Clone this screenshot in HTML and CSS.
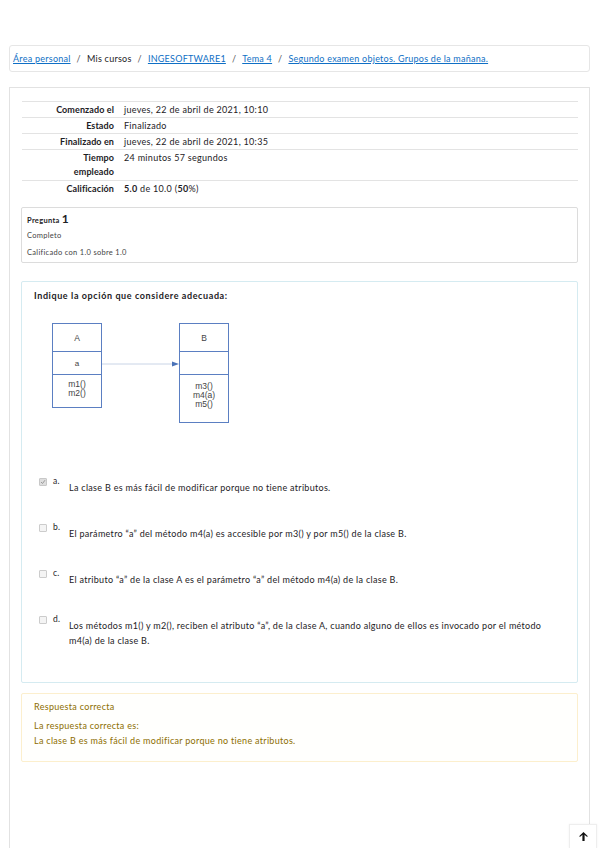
FILE: index.html
```html
<!DOCTYPE html>
<html lang="es">
<head>
<meta charset="utf-8">
<title>Segundo examen objetos</title>
<link rel="stylesheet" href="styles.css">
</head>
<body>
<div class="page">
  <nav class="crumbs">
    <a href="#">Área personal</a><span class="sep">/</span><span class="plain">Mis cursos</span><span class="sep">/</span><a href="#">INGESOFTWARE1</a><span class="sep">/</span><a href="#">Tema 4</a><span class="sep">/</span><a href="#">Segundo examen objetos. Grupos de la mañana.</a>
  </nav>
  <main class="card">
    <table class="summary">
      <tr><th>Comenzado el</th><td>jueves, 22 de abril de 2021, 10:10</td></tr>
      <tr><th>Estado</th><td>Finalizado</td></tr>
      <tr><th>Finalizado en</th><td>jueves, 22 de abril de 2021, 10:35</td></tr>
      <tr><th>Tiempo<br>empleado</th><td>24 minutos 57 segundos</td></tr>
      <tr><th>Calificación</th><td><b>5.0</b> de 10.0 (<b>50</b>%)</td></tr>
    </table>

    <div class="info">
      <div class="qno">Pregunta <span class="num">1</span></div>
      <div class="state">Completo</div>
      <div class="grade">Calificado con 1.0 sobre 1.0</div>
    </div>

    <div class="content">
      <p class="qtext">Indique la opción que considere adecuada:</p>
      <div class="diagram">
        <div class="uml">
          <div class="uml-name">A</div>
          <div class="uml-attr">a</div>
          <div class="uml-meth">m1()<br>m2()</div>
        </div>
        <svg class="assoc" width="77" height="8" viewBox="0 0 77 8">
          <line x1="0" y1="4" x2="71" y2="4" stroke="#c9d4e6" stroke-width="1"/>
          <polygon points="70,1.5 77,4 70,6.5" fill="#4a72b8"/>
        </svg>
        <div class="uml uml-b">
          <div class="uml-name">B</div>
          <div class="uml-attr"></div>
          <div class="uml-meth">m3()<br>m4(a)<br>m5()</div>
        </div>
      </div>

      <div class="answers">
        <div class="opt opt-a"><span class="box checked"><svg width="6" height="6" viewBox="0 0 6 6"><path d="M1 3 L2.5 4.5 L5 1.2" fill="none" stroke="#9a9a9a" stroke-width="1"/></svg></span><span class="letter">a.</span><span class="otext">La clase B es más fácil de modificar porque no tiene atributos.</span></div>
        <div class="opt"><span class="box"></span><span class="letter">b.</span><span class="otext">El parámetro “a” del método m4(a) es accesible por m3() y por m5() de la clase B.</span></div>
        <div class="opt"><span class="box"></span><span class="letter">c.</span><span class="otext">El atributo “a” de la clase A es el parámetro “a” del método m4(a) de la clase B.</span></div>
        <div class="opt"><span class="box"></span><span class="letter">d.</span><span class="otext">Los métodos m1() y m2(), reciben el atributo “a”, de la clase A, cuando alguno de ellos es invocado por el método m4(a) de la clase B.</span></div>
      </div>
    </div>

    <div class="feedback">
      <p class="fb-title">Respuesta correcta</p>
      <p class="fb-right">La respuesta correcta es:<br>La clase B es más fácil de modificar porque no tiene atributos.</p>
    </div>
  </main>
</div>
<a class="totop" href="#">
  <svg width="11" height="11" viewBox="0 0 10 10"><path d="M5 0.8 L9.2 5 L7.6 5 L6 3.5 L6 9.2 L4 9.2 L4 3.5 L2.4 5 L0.8 5 Z" fill="#111"/></svg>
</a>
</body>
</html>
```
FILE: styles.css
```css
* { box-sizing: border-box; }
html, body { margin: 0; padding: 0; background: #fff; }
body {
  font-family: "Lato", "Open Sans", sans-serif;
  font-size: 9px;
  color: #1d2125;
  letter-spacing: 0.3px;
}
.page { padding: 45px 9px 0 9px; }

.crumbs {
  height: 27px;
  border: 1px solid #e6e6e6;
  border-radius: 3px;
  padding-left: 3px;
  display: flex;
  align-items: center;
  font-size: 9px;
  letter-spacing: 0.25px;
}
.crumbs a { color: #0f6fc5; text-decoration: underline; }
.crumbs .plain { color: #1d2125; }
.crumbs .sep { color: #555; margin: 0 6px; }

.card {
  margin-top: 15px;
  border: 1px solid #e2e2e2;
  border-bottom: none;
  padding: 13px 11px 90px 11px;
  min-height: 770px;
}

.summary {
  width: 556px;
  margin-left: 1px;
  border-collapse: collapse;
}
.summary th, .summary td {
  border-top: 1px solid #e3e3e3;
  padding: 3px 4px 2px 4px;
  line-height: 10px;
  vertical-align: top;
  height: 16px;
}
.summary th {
  width: 96px;
  text-align: right;
  font-weight: 700;
  padding-right: 4px;
  letter-spacing: 0.1px;
}
.summary tr:nth-child(4) th { line-height: 14px; padding-top: 1px; padding-bottom: 1px; }
.summary td { text-align: left; padding-left: 6px; }

.info {
  margin-top: 10px;
  border: 1px solid #dcdcdc;
  border-radius: 2px;
  height: 56px;
  padding: 4px 5px 0 5px;
  font-size: 7.5px;
  letter-spacing: 0.3px;
  color: #444;
}
.qno { font-weight: 700; color: #1d2125; line-height: 14px; }
.qno .num { font-size: 12px; }
.state { margin-top: 3px; line-height: 10px; }
.grade { margin-top: 7px; line-height: 10px; }

.content {
  margin-top: 18px;
  border: 1px solid #d5ebf1;
  border-radius: 2px;
  height: 402px;
  padding: 8px 12px;
}
.qtext { margin: 0; font-weight: 700; line-height: 12px; color: #1d2125; letter-spacing: 0.6px; }

.diagram {
  margin: 21px 0 0 18px;
  display: flex;
  align-items: flex-start;
  font-family: "Liberation Sans", Arial, sans-serif;
  letter-spacing: 0;
  font-size: 8.5px;
  color: #444;
}
.uml {
  width: 50px;
  border: 1px solid #5b7fc2;
  text-align: center;
}
.uml-name { height: 28px; line-height: 28px; border-bottom: 1px solid #5b7fc2; }
.uml-attr { height: 23px; line-height: 23px; border-bottom: 1px solid #5b7fc2; font-size: 8px; }
.uml-meth { height: 32px; padding-top: 5px; line-height: 9px; }
.uml-b .uml-meth { height: 47px; padding-top: 7px; }
.assoc { margin-top: 37px; display: block; }

.answers { margin-top: 54px; padding-left: 5px; }
.opt { display: flex; align-items: flex-start; height: 46px; }
.opt:last-child { height: auto; }
.box {
  width: 8px; height: 8px;
  margin-top: 1px;
  border: 1px solid #ccc;
  border-radius: 1px;
  background: #f4f4f4;
  flex: none;
  display: flex;
  align-items: center;
  justify-content: center;
}
.box.checked { background: #dedede; border-color: #c8c8c8; }
.letter { width: 22px; padding-left: 6px; flex: none; line-height: 9px; font-size: 8.5px; }
.otext { margin-top: 3px; line-height: 15px; width: 492px; }

.feedback {
  margin-top: 10px;
  border: 1px solid #fcefcd;
  background: #fffffd;
  border-radius: 2px;
  height: 69px;
  padding: 7px 12px;
  color: #8d6e00;
}
.fb-title { margin: 0; line-height: 12px; }
.fb-right { margin: 5px 0 0 0; line-height: 15px; }

.totop {
  position: fixed;
  right: 2px;
  bottom: 0;
  width: 28px;
  height: 24px;
  background: #fff;
  border: 1px solid #eee;
  border-bottom: none;
  display: flex;
  align-items: center;
  justify-content: center;
  box-shadow: 0 0 2px rgba(0,0,0,0.06);
}
```
